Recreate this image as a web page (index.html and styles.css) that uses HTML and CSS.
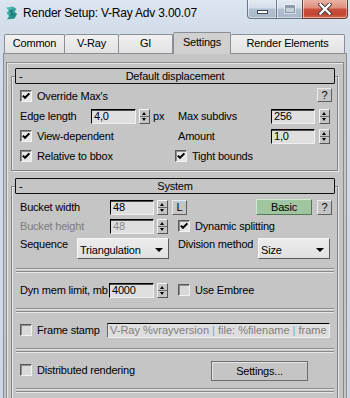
FILE: index.html
```html
<!DOCTYPE html>
<html>
<head>
<meta charset="utf-8">
<title>Render Setup</title>
<link rel="stylesheet" href="styles.css">
</head>
<body>
<div class="window">
  <div class="titlebar">
    <svg class="app-icon" viewBox="0 0 13 14" aria-hidden="true">
      <defs>
        <linearGradient id="ig" x1="0" y1="0" x2="1" y2="1">
          <stop offset="0" stop-color="#5fd0c4"/>
          <stop offset="1" stop-color="#0d7270"/>
        </linearGradient>
      </defs>
      <path d="M1 1.5 L8 0.5 L11.5 3 L9.5 5.5 L12 8 L9.5 12.5 L2 13.5 L4 10 L1.5 7 L3.5 4.5 Z" fill="url(#ig)"/>
      <path d="M4 4.5 L8.5 3.5 L7 6.5 L9 8.5 L5 10 L6 7.5 Z" fill="#0a5553" opacity="0.55"/>
    </svg>
    <span class="title">Render Setup: V-Ray Adv 3.00.07</span>
    <div class="caption-btns">
      <div class="cbtn cbtn-min"><span class="g-min"></span></div>
      <div class="cbtn cbtn-max"><span class="g-max"></span></div>
      <div class="cbtn cbtn-close">
        <svg class="g-close" viewBox="0 0 14 12" aria-hidden="true">
          <path d="M2.5 1.5 L11.5 10.5 M11.5 1.5 L2.5 10.5" stroke="#3b3b3b" stroke-width="4.2" stroke-linecap="square"/>
          <path d="M2.5 1.5 L11.5 10.5 M11.5 1.5 L2.5 10.5" stroke="#ffffff" stroke-width="2.4" stroke-linecap="square"/>
        </svg>
      </div>
    </div>
  </div>
  <div class="client">
    <div class="tabs">
      <div class="tab t-common">Common</div>
      <div class="tab t-vray">V-Ray</div>
      <div class="tab t-gi">GI</div>
      <div class="tab t-settings active">Settings</div>
      <div class="tab t-re">Render Elements</div>
    </div>
    <div class="panel">
      <div class="scroll">
        <div class="rollout r1">
          <div class="rhead"><span class="rminus">-</span><span class="rtitle">Default displacement</span><span class="rpad"></span></div>
          <div class="rbody">
            <div class="row">
              <div class="cell-l">
                <span class="cb on"><svg viewBox="0 0 10 10"><path d="M1.8 4.6 L4 6.8 L8.4 2.4" /></svg></span>
                <span>Override Max's</span>
              </div>
              <div class="btn qbtn push">?</div>
            </div>
            <div class="row">
              <div class="cell-l">
                <span class="lbl w71">Edge length</span>
                <span class="num w45">4,0</span>
                <span class="spin"></span>
                <span class="unit">px</span>
              </div>
              <div class="cell-r">
                <span class="lbl w93">Max subdivs</span>
                <span class="num w44">256</span>
                <span class="spin sp4"></span>
              </div>
            </div>
            <div class="row">
              <div class="cell-l">
                <span class="cb on"><svg viewBox="0 0 10 10"><path d="M1.8 4.6 L4 6.8 L8.4 2.4" /></svg></span>
                <span>View-dependent</span>
              </div>
              <div class="cell-r">
                <span class="lbl w93">Amount</span>
                <span class="num w44">1,0</span>
                <span class="spin sp4"></span>
              </div>
            </div>
            <div class="row">
              <div class="cell-l">
                <span class="cb on"><svg viewBox="0 0 10 10"><path d="M1.8 4.6 L4 6.8 L8.4 2.4" /></svg></span>
                <span>Relative to bbox</span>
              </div>
              <div class="cell-r shift">
                <span class="cb on"><svg viewBox="0 0 10 10"><path d="M1.8 4.6 L4 6.8 L8.4 2.4" /></svg></span>
                <span>Tight bounds</span>
              </div>
            </div>
          </div>
        </div>

        <div class="rollout r2">
          <div class="rhead"><span class="rminus">-</span><span class="rtitle">System</span><span class="rpad"></span></div>
          <div class="rbody sys">
            <div class="row ra">
              <span class="lbl w90">Bucket width</span>
              <span class="num w44">48</span>
              <span class="spin"></span>
              <div class="btn lbtn">L</div>
              <div class="btn basic push">Basic</div>
              <div class="btn qbtn q2">?</div>
            </div>
            <div class="row rb">
              <div class="cell-l">
                <span class="lbl w90 dis">Bucket height</span>
                <span class="num w44 dis">48</span>
                <span class="spin"></span>
              </div>
              <div class="cell-r">
                <span class="cb on"><svg viewBox="0 0 10 10"><path d="M1.8 4.6 L4 6.8 L8.4 2.4" /></svg></span>
                <span>Dynamic splitting</span>
              </div>
            </div>
            <div class="row rc">
              <div class="cell-l">
                <span class="lbl w57 top">Sequence</span>
                <div class="dd w92"><span>Triangulation</span><span class="arrow"></span></div>
              </div>
              <div class="cell-r">
                <span class="lbl w80 top">Division method</span>
                <div class="dd w72"><span>Size</span><span class="arrow"></span></div>
              </div>
            </div>
            <div class="sep first"></div>
            <div class="row tall">
              <div class="cell-l">
                <span class="lbl w89">Dyn mem limit, mb</span>
                <span class="num w45">4000</span>
                <span class="spin"></span>
              </div>
              <div class="cell-r">
                <span class="cb"></span>
                <span>Use Embree</span>
              </div>
            </div>
            <div class="sep"></div>
            <div class="row tall">
              <span class="cb"></span>
              <span class="lbl w70">Frame stamp</span>
              <div class="field"><span>V-Ray %vrayversion <i>|</i> file: %filename <i>|</i> frame</span></div>
            </div>
            <div class="sep"></div>
            <div class="row tall">
              <span class="cb"></span>
              <span>Distributed rendering</span>
              <div class="btn settings push">Settings...</div>
            </div>
            <div class="sep"></div>
            <div class="row tall"></div>
          </div>
        </div>
      </div>
    </div>
  </div>
</div>
</body>
</html>
```
FILE: styles.css
```css
* { box-sizing: border-box; }
html, body {
  margin: 0;
  padding: 0;
  width: 350px;
  height: 398px;
  overflow: hidden;
}
body {
  font-family: "Liberation Sans", Arial, sans-serif;
  font-size: 11px;
  letter-spacing: -0.2px;
  color: #000;
  background: #cfdae7;
}
.window {
  width: 350px;
  height: 398px;
  display: flex;
  flex-direction: column;
  background: linear-gradient(#dce6f2 0, #d2dde9 30px, #cdd8e5 100%);
}

/* title bar */
.titlebar {
  height: 29px;
  flex-shrink: 0;
  display: flex;
  align-items: flex-start;
}
.app-icon {
  width: 13px;
  height: 14px;
  margin: 6px 0 0 5px;
  flex-shrink: 0;
}
.title {
  font-size: 12px;
  letter-spacing: -0.2px;
  line-height: 16px;
  margin: 5px 0 0 5px;
  color: #000;
  white-space: nowrap;
}
.caption-btns {
  margin-left: auto;
  margin-right: 2px;
  display: flex;
}
.cbtn {
  height: 19px;
  border: 1px solid #69778a;
  border-top: none;
  display: flex;
  align-items: center;
  justify-content: center;
  box-shadow: inset 1px 0 0 rgba(255,255,255,0.55), inset -1px 0 0 rgba(255,255,255,0.35), inset 0 -1px 0 rgba(255,255,255,0.45);
}
.cbtn-min {
  width: 29px;
  border-radius: 0 0 0 4px;
  border-right: none;
  background: linear-gradient(#e3eaf2 0, #d3dde9 45%, #b1bfcf 50%, #a9b8ca 100%);
}
.cbtn-max {
  width: 26px;
  border-right: none;
  background: linear-gradient(#e3eaf2 0, #d3dde9 45%, #b1bfcf 50%, #a9b8ca 100%);
}
.cbtn-close {
  width: 46px;
  border-radius: 0 0 4px 0;
  border-color: #6f3a33;
  background: linear-gradient(#eab2a4 0, #de8d7a 45%, #c9503b 50%, #c24531 80%, #d26a4f 100%);
}
.g-min {
  width: 11px;
  height: 4px;
  margin-top: 6px;
  background: #fff;
  border: 1px solid #3f4a58;
}
.g-max {
  width: 10px;
  height: 8px;
  border: 1px solid #8e9bab;
  box-shadow: inset 0 2px 0 #8e9bab, 0 0 0 1px rgba(255,255,255,0.5);
  background: #c5d0dd;
}
.g-close {
  width: 14px;
  height: 12px;
}

/* client */
.client {
  flex: 1;
  min-height: 0;
  display: flex;
  flex-direction: column;
  padding: 0 3px;
}
.tabs {
  height: 24px;
  flex-shrink: 0;
  display: flex;
  align-items: flex-end;
  padding-left: 1px;
  position: relative;
  z-index: 1;
}
.tab {
  height: 19px;
  border: 1px solid #8b8e94;
  border-bottom: none;
  border-radius: 2px 2px 0 0;
  background: linear-gradient(#f1f1f1, #e2e2e2);
  text-align: center;
  line-height: 17px;
  white-space: nowrap;
  flex-shrink: 0;
}
.t-common { width: 61px; }
.t-vray { width: 54px; border-left: none; }
.t-gi { width: 54px; border-left: none; }
.t-settings { width: 58px; border-left: none; }
.t-re { width: 114px; border-left: none; }
.tab.active {
  height: 22px;
  margin-bottom: -1px;
  padding-top: 1px;
  background: #d0d0d0;
  border-left: 1px solid #8b8e94;
  border-right: 1px solid #8b8e94;
}
.t-re { border-left: none; }

.panel {
  flex: 1;
  min-height: 0;
  border: 1px solid #8b8e94;
  border-bottom: none;
  background: #c5c5c5;
  padding: 8px 2px 0 2px;
  overflow: hidden;
}
.scroll {
  height: 400px;
  border-top: 1px solid #8a8a8a;
  border-left: 1px solid #8a8a8a;
  border-right: 1px solid #8a8a8a;
  box-shadow: inset 1px 1px 0 #e6e6e6;
}

/* rollouts */
.rollout {
  margin: 13px 5px 0 4px;
  border: 1px solid #838383;
  box-shadow: 1px 1px 0 #e9e9e9, inset 1px 1px 0 #e9e9e9;
  padding: 0 2px 0 3px;
}
.rollout.r2 { margin-top: 15px; }
.rhead {
  margin-top: -9px;
  height: 16px;
  border: 1px solid #111;
  border-radius: 1px;
  background: #c5c5c5;
  display: flex;
  align-items: center;
  line-height: 14px;
}
.rminus {
  width: 20px;
  padding-left: 3px;
  flex-shrink: 0;
}
.rpad { width: 20px; flex-shrink: 0; }
.rtitle {
  flex: 1;
  text-align: center;
  white-space: nowrap;
}
.rbody {
  padding: 2px 3px 4px 5px;
}
.rbody.sys { padding: 5px 3px 0 5px; }

.row {
  display: flex;
  align-items: center;
  height: 20px;
  white-space: nowrap;
}
.row.ra { height: 16px; }
.row.rb { height: 16px; margin-top: 3px; }
.row.rc { height: 21px; margin-top: 4px; align-items: stretch; }
.row.rc .cell-l, .row.rc .cell-r { align-items: stretch; }
.row.tall { height: 36px; }

.cell-l {
  width: 158px;
  flex-shrink: 0;
  display: flex;
  align-items: center;
}
.cell-r {
  flex: 1;
  display: flex;
  align-items: center;
}
.cell-r.shift { margin-left: -3px; }
.push { margin-left: auto; }

.lbl { flex-shrink: 0; white-space: nowrap; }
.lbl.top { align-self: flex-start; line-height: 12px; }
.dis { color: #7d7d7d; }
.w57 { width: 57px; }
.w70 { width: 70px; }
.w71 { width: 71px; }
.w80 { width: 80px; }
.w89 { width: 89px; }
.w90 { width: 90px; }
.w93 { width: 93px; }
.w44 { width: 44px; }
.w45 { width: 45px; }
.w72 { width: 72px; }
.w92 { width: 92px; }

/* checkbox */
.cb {
  width: 12px;
  height: 12px;
  flex-shrink: 0;
  margin-right: 5px;
  border: 1px solid;
  border-color: #5a5a5a #f2f2f2 #f2f2f2 #5a5a5a;
  box-shadow: inset 1px 1px 0 #8d8d8d;
  background: #d9d9d9;
  display: flex;
  align-items: center;
  justify-content: center;
}
.cb.on { background: #e6e6e6; }
.cb svg { width: 10px; height: 10px; }
.cb path {
  fill: none;
  stroke: #000;
  stroke-width: 2;
}

/* numeric field */
.num {
  height: 15px;
  flex-shrink: 0;
  border: 1px solid;
  border-color: #000 #efefef #efefef #000;
  box-shadow: inset 0 1px 0 #4a4a4a;
  background: #dfdfdf;
  padding-left: 2px;
  line-height: 13px;
}
.num.dis { color: #8a8a8a; }

/* spinner */
.spin {
  width: 11px;
  height: 15px;
  flex-shrink: 0;
  margin-left: 3px;
  border: 1px solid;
  border-color: #f3f3f3 #555 #555 #f3f3f3;
  background:
    linear-gradient(#c5c5c5 0, #c5c5c5 6px, #6a6a6a 6px, #6a6a6a 7px, #c5c5c5 7px);
  position: relative;
}
.spin.sp4 { margin-left: 4px; }
.spin::before, .spin::after {
  content: "";
  position: absolute;
  left: 2px;
  width: 0;
  height: 0;
  border-left: 2.5px solid transparent;
  border-right: 2.5px solid transparent;
}
.spin::before { top: 2px; border-bottom: 3px solid #000; }
.spin::after { bottom: 2px; border-top: 3px solid #000; }
.unit { margin-left: 3px; }

/* buttons */
.btn {
  flex-shrink: 0;
  border: 1px solid;
  border-color: #ececec #5f5f5f #5f5f5f #ececec;
  background: #c5c5c5;
  text-align: center;
  display: flex;
  align-items: center;
  justify-content: center;
}
.qbtn {
  width: 15px;
  height: 14px;
  margin-top: -2px;
}
.qbtn.q2 { height: 15px; margin-top: 0; margin-left: 5px; }
.lbtn {
  width: 15px;
  height: 15px;
  margin-left: 4px;
}
.basic {
  width: 56px;
  height: 16px;
  background: #9fc69f;
  border-color: #d2e6d2 #55775a #55775a #d2e6d2;
}
.settings {
  width: 97px;
  height: 20px;
  margin-top: 2px;
  margin-right: 24px;
  border: 1px solid #6d6d6d;
  box-shadow: inset 1px 1px 0 #e4e4e4;
}

/* dropdown */
.dd {
  height: 21px;
  flex-shrink: 0;
  border: 1px solid;
  border-color: #f7f7f7 #5b5b5b #5b5b5b #f7f7f7;
  background: linear-gradient(#ececec, #e0e0e0);
  display: flex;
  align-items: center;
  padding: 2px 0 0 2px;
}
.dd span:first-child { flex: 1; }
.dd .arrow {
  width: 0;
  height: 0;
  margin-right: 5px;
  border-left: 4px solid transparent;
  border-right: 4px solid transparent;
  border-top: 4px solid #000;
}

/* separator */
.sep {
  height: 4px;
  border-top: 1px solid #8a8a8a;
  border-bottom: 1px solid #8a8a8a;
  box-shadow: inset 0 1px 0 #e6e6e6, 0 1px 0 #e6e6e6;
  margin: 0 -2px 0 -4px;
}
.sep.first { margin-top: 9px; }

/* frame stamp field */
.field {
  width: 223px;
  height: 15px;
  flex-shrink: 0;
  overflow: hidden;
  border: 1px solid;
  border-color: #000 #efefef #efefef #6a6a6a;
  background: #dedede;
  color: #7f7f7f;
  padding-left: 2px;
  line-height: 13px;
  letter-spacing: 0;
  white-space: nowrap;
}
.field i {
  font-style: normal;
  color: #76a6d8;
}
```
